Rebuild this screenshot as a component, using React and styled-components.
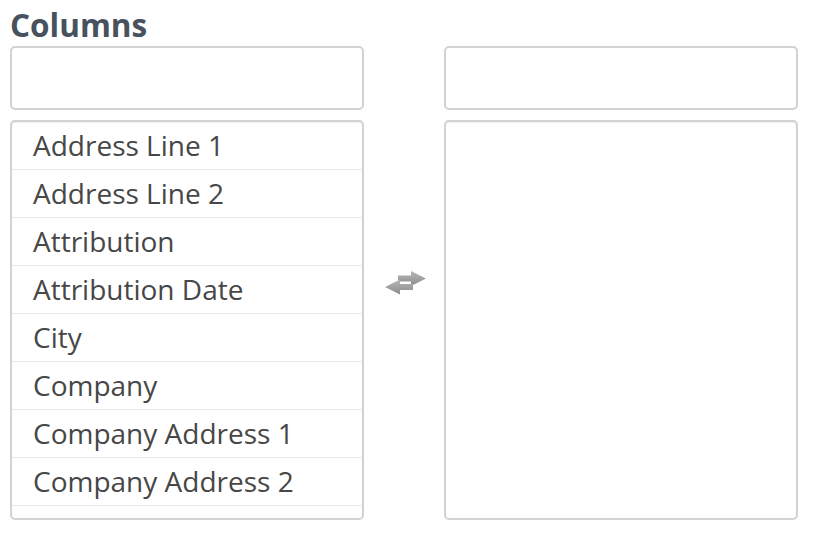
import React from "react";
import styled, { createGlobalStyle } from "styled-components";

const GlobalStyle = createGlobalStyle`
  body {
    margin: 0;
    background: #ffffff;
    font-family: "Open Sans", "Liberation Sans", sans-serif;
  }
`;

const Page = styled.div`
  padding: 0 10px;
  width: 788px;
`;

const Title = styled.h2`
  margin: 0;
  padding-top: 3px;
  font-size: 31.5px;
  font-weight: 700;
  line-height: 43px;
  color: #47525e;
`;

const Columns = styled.div`
  display: flex;
  align-items: center;
`;

const Side = styled.div`
  width: 354px;
  display: flex;
  flex-direction: column;
  gap: 10px;
`;

const Filter = styled.input`
  box-sizing: border-box;
  width: 100%;
  height: 64px;
  border: 2px solid #d2d2d2;
  border-radius: 5px;
  outline: none;
  padding: 0 20px;
  font: inherit;
`;

const ListBox = styled.div`
  box-sizing: border-box;
  height: 400px;
  border: 2px solid #d2d2d2;
  border-radius: 5px;
  overflow: hidden;
  box-shadow: inset 0 1px 2px rgba(0, 0, 0, 0.06);
`;

const Item = styled.div`
  height: 47px;
  border-bottom: 1px solid #e9e9e9;
  padding-left: 21px;
  font-size: 28px;
  line-height: 47px;
  color: #474747;
  white-space: nowrap;
`;

const Middle = styled.div`
  width: 81px;
  display: flex;
  justify-content: center;
  padding-left: 3px;
  box-sizing: border-box;
`;

const TransferIcon = () => (
  <svg width="42" height="24" viewBox="0 0 42 24">
    <defs>
      <linearGradient id="g" x1="0" y1="0" x2="0" y2="1">
        <stop offset="0" stopColor="#b8b8b8" />
        <stop offset="1" stopColor="#8c8c8c" />
      </linearGradient>
    </defs>
    <path d="M13 4.5h13V0l15 7.5-15 7.5v-4.5H13z" fill="url(#g)" />
    <path d="M28 13H15V8.5L0 16l15 7.5V19h13z" fill="url(#g)" />
  </svg>
);

const leftItems = [
  "Address Line 1",
  "Address Line 2",
  "Attribution",
  "Attribution Date",
  "City",
  "Company",
  "Company Address 1",
  "Company Address 2",
];

const App = () => (
  <>
    <GlobalStyle />
    <Page>
      <Title>Columns</Title>
      <Columns>
        <Side>
          <Filter />
          <ListBox>
            {leftItems.map((name) => (
              <Item key={name}>{name}</Item>
            ))}
          </ListBox>
        </Side>
        <Middle>
          <TransferIcon />
        </Middle>
        <Side>
          <Filter />
          <ListBox />
        </Side>
      </Columns>
    </Page>
  </>
);

export default App;
